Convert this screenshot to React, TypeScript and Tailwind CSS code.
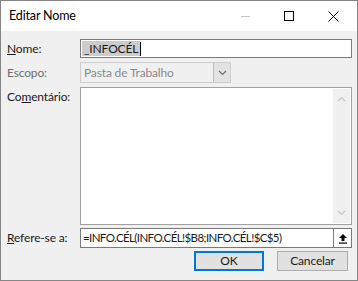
import React from "react";

const font = { fontFamily: 'Lato, "Open Sans", "Noto Sans", sans-serif' };

function Chevron({ up, className }: { up?: boolean; className?: string }) {
  return (
    <svg width="9" height="6" viewBox="0 0 9 6" className={className}>
      <path
        d={up ? "M1 5 L4.5 1.5 L8 5" : "M1 1 L4.5 4.5 L8 1"}
        fill="none"
        stroke="currentColor"
        strokeWidth="1.2"
      />
    </svg>
  );
}

export default function App() {
  return (
    <div
      className="w-[358px] h-[281px] bg-[#f0f0f0] border border-[#858585] flex flex-col text-[12px] tracking-[-0.15px] text-[#1a1a1a] overflow-hidden"
      style={font}
    >
      {/* title bar */}
      <div className="h-[30px] bg-white flex items-center shrink-0">
        <span className="pl-[8px] text-[12.5px] text-black flex-1">Editar Nome</span>
        <div className="flex h-full pr-[2px]">
          <div className="w-[44px] flex items-center justify-center">
            <div className="w-[9px] h-px bg-[#c4c4c4]" />
          </div>
          <div className="w-[44px] flex items-center justify-center">
            <div className="w-[10px] h-[10px] border border-black" />
          </div>
          <div className="w-[44px] flex items-center justify-center">
            <svg width="11" height="11" viewBox="0 0 11 11">
              <path d="M0.5 0.5 L10.5 10.5 M10.5 0.5 L0.5 10.5" stroke="black" strokeWidth="1" />
            </svg>
          </div>
        </div>
      </div>

      <div className="flex-1 flex flex-col pl-[6px] pr-[5px] pt-[8px]">
        {/* Nome */}
        <div className="flex items-center h-[19px]">
          <label className="w-[73px]">
            <span className="underline">N</span>ome:
          </label>
          <div className="flex-1 h-full bg-white border border-[#7a7a7a] flex items-center pl-[1px]">
            <span className="bg-[#cccccc] px-[2px] leading-[15px]">_INFOCÉL</span>
            <span className="w-px h-[14px] bg-black" />
          </div>
        </div>

        {/* Escopo */}
        <div className="flex items-center h-[21px] mt-[4px]">
          <label className="w-[73px] text-[#6d6d6d]">Escopo:</label>
          <div className="w-[151px] h-full bg-[#f0f0f0] border border-[#cccccc] flex items-center">
            <span className="flex-1 pl-[3px] text-[#8a8a8a]">Pasta de Trabalho</span>
            <div className="w-[17px] h-[19px] bg-[#e3e3e3] border-l border-[#bcbcbc] flex items-center justify-center text-[#6d6d6d]">
              <Chevron />
            </div>
          </div>
        </div>

        {/* Comentário */}
        <div className="flex mt-[4px] h-[138px]">
          <label className="w-[73px] pt-[1px]">
            Co<span className="underline">m</span>entário:
          </label>
          <div className="flex-1 bg-white border border-[#a0a0a0] flex justify-end">
            <div className="w-[17px] my-[1px] mr-[1px] bg-[#f0f0f0] flex flex-col items-center justify-between py-[7px] text-[#c4c4c4]">
              <Chevron up />
              <Chevron />
            </div>
          </div>
        </div>

        {/* Refere-se a */}
        <div className="flex items-center h-[20px] mt-[3px]">
          <label className="w-[73px]">
            <span className="underline">R</span>efere-se a:
          </label>
          <div className="flex-1 h-full bg-white border border-[#7a7a7a] flex items-center">
            <span className="flex-1 pl-[2px] whitespace-nowrap text-[11.5px] tracking-[-0.6px]">
              =INFO.CÉL(INFO.CÉL!$B8;INFO.CÉL!$C$5)
            </span>
            <div className="w-[18px] h-[18px] border-l border-[#7a7a7a] flex items-center justify-center">
              <svg width="10" height="11" viewBox="0 0 10 11">
                <path d="M5 1 L9 5 L6.5 5 L6.5 8 L3.5 8 L3.5 5 L1 5 Z" fill="black" />
                <rect x="1" y="9.5" width="8" height="1.2" fill="black" />
              </svg>
            </div>
          </div>
        </div>

        {/* buttons */}
        <div className="flex justify-end gap-[13px] mt-[3px] pr-[4px]">
          <button className="w-[70px] h-[20px] bg-[#e1e1e1] border-2 border-[#0078d7] flex items-center justify-center">
            OK
          </button>
          <button className="w-[71px] h-[20px] bg-[#e1e1e1] border border-[#adadad] flex items-center justify-center">
            Cancelar
          </button>
        </div>
      </div>
    </div>
  );
}
